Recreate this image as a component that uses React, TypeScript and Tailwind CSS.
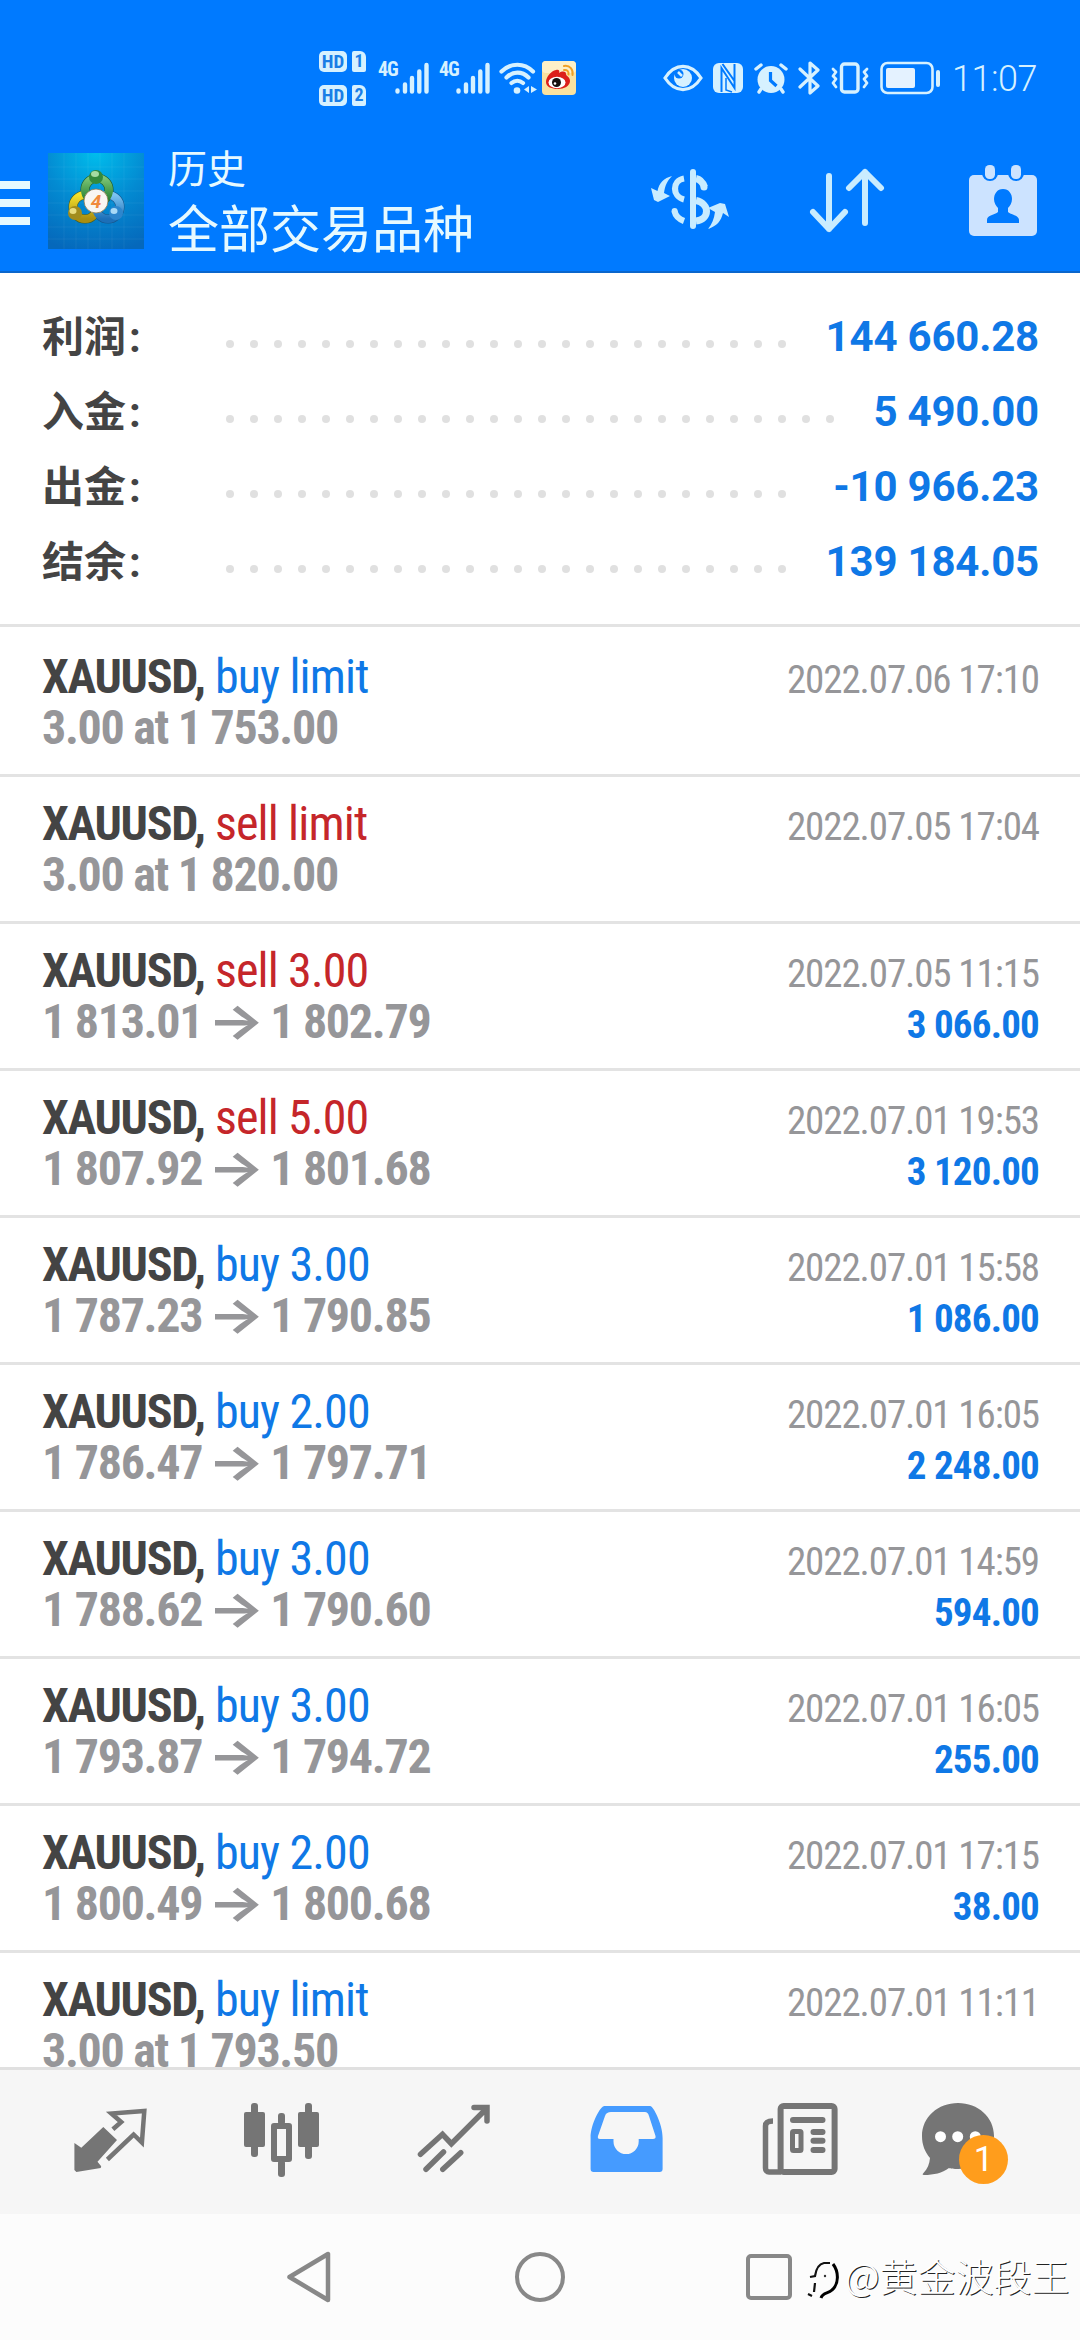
import React from 'react';

type Side = 'buy' | 'sell';

interface HistoryItem {
  side: Side;
  label: string;
  time: string;
  order?: string;
  open?: string;
  close?: string;
  profit?: string;
}

interface SummaryItem {
  label: string;
  value: string;
  dots: number;
}

const summary: SummaryItem[] = [
  { label: '利润', value: '144 660.28', dots: 24 },
  { label: '入金', value: '5 490.00', dots: 26 },
  { label: '出金', value: '-10 966.23', dots: 24 },
  { label: '结余', value: '139 184.05', dots: 24 },
];

const history: HistoryItem[] = [
  { side: 'buy', label: 'buy limit', time: '2022.07.06 17:10', order: '3.00 at 1 753.00' },
  { side: 'sell', label: 'sell limit', time: '2022.07.05 17:04', order: '3.00 at 1 820.00' },
  { side: 'sell', label: 'sell 3.00', time: '2022.07.05 11:15', open: '1 813.01', close: '1 802.79', profit: '3 066.00' },
  { side: 'sell', label: 'sell 5.00', time: '2022.07.01 19:53', open: '1 807.92', close: '1 801.68', profit: '3 120.00' },
  { side: 'buy', label: 'buy 3.00', time: '2022.07.01 15:58', open: '1 787.23', close: '1 790.85', profit: '1 086.00' },
  { side: 'buy', label: 'buy 2.00', time: '2022.07.01 16:05', open: '1 786.47', close: '1 797.71', profit: '2 248.00' },
  { side: 'buy', label: 'buy 3.00', time: '2022.07.01 14:59', open: '1 788.62', close: '1 790.60', profit: '594.00' },
  { side: 'buy', label: 'buy 3.00', time: '2022.07.01 16:05', open: '1 793.87', close: '1 794.72', profit: '255.00' },
  { side: 'buy', label: 'buy 2.00', time: '2022.07.01 17:15', open: '1 800.49', close: '1 800.68', profit: '38.00' },
  { side: 'buy', label: 'buy limit', time: '2022.07.01 11:11', order: '3.00 at 1 793.50' },
];

const SimBadge: React.FC<{ slot: string }> = ({ slot }) => (
  <div className="flex h-[21px] gap-[5px] text-[#1a7ee6] font-bold">
    <span className="flex w-7 items-center justify-center rounded-[5px] bg-[#d6f1ff] text-[19px] leading-none [font-stretch:75%]">HD</span>
    <span className="flex w-3.5 items-center justify-center rounded-[2px] rounded-tr-[6px] bg-[#d6f1ff] text-[18px] leading-none [font-stretch:75%]">{slot}</span>
  </div>
);

const Signal: React.FC = () => (
  <div className="flex h-8 w-[51px] items-start">
    <span className="w-[17px] text-[20px] leading-[15px] font-bold tracking-[-1px] [font-stretch:75%]">4G</span>
    <svg className="h-8 w-[34px]" viewBox="0 0 34 32" stroke="currentColor" strokeWidth="4.4" strokeLinecap="round">
      <path d="M2.5 28.5v1M10 22.5v7M17 16v13.5M24.3 9.5v20M31.5 3v26.5" />
    </svg>
  </div>
);

const StatusBar: React.FC = () => (
  <div className="flex h-[132px] items-center pt-6 pl-[319px] text-[#d6f1ff]">
    <div className="flex w-12 flex-col gap-[13px]">
      <SimBadge slot="1" />
      <SimBadge slot="2" />
    </div>
    <div className="ml-[11px] flex gap-[10px]">
      <Signal />
      <Signal />
    </div>
    <svg className="ml-[9px] h-8 w-[39px]" viewBox="0 0 39 32" fill="none" stroke="currentColor" strokeWidth="4.2" strokeLinecap="round">
      <path d="M2.5 9.5C12 .5 25 .5 34 9.5M7.5 15.500C14 9 23 9 29.5 15.500M12.5 21c3.5-3 8-3 11.5 0" />
      <circle cx="18" cy="28.5" r="3.3" fill="currentColor" stroke="none" />
      <path d="M30 24v7l-5-3.5zM32 24l6 3.5-6 3.5z" fill="currentColor" stroke="none" />
    </svg>
    <svg className="ml-[4px] h-[34px] w-[34px]" viewBox="0 0 34 34">
      <rect width="34" height="34" rx="4" fill="#f9e2a0" />
      <rect width="34" height="12" rx="4" fill="#fdf0c8" />
      <path d="M4 21c0-5 5-11 10-12 3-1 4 1 3 3 3-2 7-2 7 1 0 2 4 3 4 7 0 5-6 8-12 8S4 26 4 21z" fill="#dc1f1a" />
      <ellipse cx="15" cy="21.5" rx="8.5" ry="5.8" fill="#fff" />
      <circle cx="14.5" cy="21.5" r="4.5" fill="#15100d" />
      <circle cx="13" cy="22.5" r="1.3" fill="#fff" />
      <path d="M22 9c3-.6 5 1.5 4.5 4.5M22 5c6-1 9.5 3.5 8.5 9" fill="none" stroke="#f0a024" strokeWidth="2" strokeLinecap="round" />
    </svg>

    {/* Right side indicators */}
    <svg className="ml-[87px] h-[28px] w-[40px]" viewBox="0 0 40 28">
      <path d="M2 14C12-1.500 28-1.500 38 14 28 29.500 12 29.500 2 14z" fill="none" stroke="currentColor" strokeWidth="3.2" />
      <circle cx="20" cy="14" r="9" fill="currentColor" />
      <circle cx="16" cy="10" r="4.5" fill="#007aff" />
      <path d="M15 8l4 4" stroke="currentColor" strokeWidth="2.5" />
    </svg>
    <svg className="ml-[10px] h-[30px] w-[30px]" viewBox="0 0 30 30">
      <rect width="30" height="30" rx="6" fill="currentColor" />
      <path d="M8.5 29V5l13 20V1M9.5 1l12 17" fill="none" stroke="#007aff" strokeWidth="2" />
      <path d="M13 15v12l6 2" fill="none" stroke="#007aff" strokeWidth="1.5" />
    </svg>
    <svg className="ml-[11px] h-[31px] w-[34px]" viewBox="0 0 34 31">
      <circle cx="17" cy="16.5" r="13.5" fill="currentColor" />
      <path d="M2 6l5-4M32 6l-5-4M7 26l-2 3M27 26l2 3" stroke="currentColor" strokeWidth="3.4" strokeLinecap="round" />
      <path d="M16.5 9v8.5l6 5.5" fill="none" stroke="#007aff" strokeWidth="3.2" />
    </svg>
    <svg className="ml-[10px] h-[34px] w-[24px]" viewBox="0 0 24 34" fill="none" stroke="currentColor" strokeWidth="3.2" strokeLinecap="round" strokeLinejoin="round">
      <path d="M2 8l18 17-8 7V2l8 7L2 26" />
    </svg>
    <svg className="ml-[8px] h-[32px] w-[40px]" viewBox="0 0 40 32" fill="none" stroke="currentColor" strokeWidth="3.4" strokeLinejoin="round" strokeLinecap="round">
      <rect x="11.5" y="2" width="16.5" height="28" rx="3" />
      <path d="M3 7l3 3-3 4 3 3-3 4 3 4M37 7l-3 3 3 4-3 3 3 4-3 4" strokeWidth="2.8" />
    </svg>
    <svg className="ml-[10px] h-[34px] w-[61px]" viewBox="0 0 61 34">
      <rect x="1.5" y="2" width="51" height="30" rx="6" fill="none" stroke="currentColor" strokeWidth="2.6" />
      <rect x="6" y="7" width="29" height="20" rx="2" fill="#e4f2ff" />
      <rect x="56" y="9" width="4" height="17" rx="2" fill="currentColor" />
    </svg>
    <span className="ml-[11px] pt-0.5 text-[36px] leading-none font-light tracking-[-0.5px]">11:07</span>
  </div>
);

const AppLogo: React.FC = () => (
  <svg className="mb-px ml-[18px] h-24 w-24" viewBox="0 0 96 96">
    <defs>
      <radialGradient id="sky" cx="0.5" cy="0" r="1.05">
        <stop offset="0" stopColor="#00bdec" />
        <stop offset="0.5" stopColor="#038bd2" />
        <stop offset="1" stopColor="#0568bb" />
      </radialGradient>
      <linearGradient id="green" x2="0" y2="1">
        <stop stopColor="#7cc576" />
        <stop offset="1" stopColor="#1f7a2c" />
      </linearGradient>
      <linearGradient id="yellow" x2="0" y2="1">
        <stop stopColor="#f5e22c" />
        <stop offset="1" stopColor="#a98e10" />
      </linearGradient>
      <linearGradient id="blue" x2="0" y2="1">
        <stop stopColor="#7cc4f2" />
        <stop offset="1" stopColor="#1c6fb8" />
      </linearGradient>
    </defs>
    <rect width="96" height="96" fill="url(#sky)" />
    <path d="M16 0v96M28 0v96M40 0v96M52 0v96M64 0v96M76 0v96M0 14h96M0 26h96M0 38h96M0 50h96M0 62h96M0 74h96M0 86h96" stroke="#fff" strokeOpacity="0.06" />
    <g fill="none" strokeWidth="8">
      <circle cx="37" cy="54" r="12" stroke="#4d5c17" strokeWidth="9" />
      <circle cx="60" cy="54" r="12" stroke="#185489" strokeWidth="9" />
      <circle cx="49" cy="37" r="12" stroke="#1e5525" strokeWidth="9" />
      <circle cx="37" cy="54" r="12" stroke="url(#yellow)" />
      <circle cx="60" cy="54" r="12" stroke="url(#blue)" />
      <circle cx="49" cy="37" r="12" stroke="url(#green)" />
    </g>
    <circle cx="48" cy="24" r="7" fill="#348a3c" />
    <ellipse cx="47" cy="21" rx="4" ry="3" fill="#a6dca2" />
    <circle cx="27" cy="60" r="7" fill="#a28c1c" />
    <ellipse cx="25" cy="58" rx="3.5" ry="3" fill="#e9dc7e" />
    <circle cx="68" cy="60" r="7" fill="#2d86cd" />
    <ellipse cx="66" cy="58" rx="3.5" ry="3" fill="#a9daf7" />
    <circle cx="48" cy="48" r="12" fill="#f8f6f2" stroke="#8a7a50" strokeWidth="0.8" />
    <text x="48" y="54.5" textAnchor="middle" fontSize="19" fontWeight="700" fontStyle="italic" fill="#f08a3c">4</text>
  </svg>
);

const AppBar: React.FC = () => (
  <div className="flex h-[141px] items-center border-b-2 border-[#0a66cc] text-[#e6f9ff]">
    <div className="flex w-[30px] flex-col gap-[10px] pt-[3px]">
      <span className="h-2 bg-[#e6f9ff]" />
      <span className="h-2 bg-[#e6f9ff]" />
      <span className="h-2 bg-[#e6f9ff]" />
    </div>
    <AppLogo />
    <div className="ml-[24px] w-[482px] pt-[3px]">
      <div className="text-[39px] leading-[54px]">历史</div>
      <div className="pt-px text-[51px] leading-[66px]">全部交易品种</div>
    </div>
    {/* Profit, sort and calendar actions */}
    <svg className="mb-[7px] h-[64px] w-[82px] text-[#c9ecff]" viewBox="0 0 82 64">
      <rect x="40" y="3" width="6" height="60" rx="3" fill="currentColor" />
      <path d="M34 12.5c-12 2-12 18 0 21M24.5 45c1 5 4 8 9.5 10" fill="none" stroke="currentColor" strokeWidth="6.2" />
      <circle cx="24.6" cy="45" r="3" fill="currentColor" />
      <path d="M46 12.5c5 1 7 4.500 8.5 8.500M46 34.500c14 3 14 19 0 20.500" fill="none" stroke="currentColor" strokeWidth="7" />
      <circle cx="54" cy="21" r="3.5" fill="currentColor" />
      <path d="M22 10C14 12 9 17 7.5 25L1 22l3 12 4 2 12-6-6-3c1-7 3-12 8-17z" fill="currentColor" />
      <path d="M58 63c9-3 13-8 15-16l6 4-4-13-5-1-12 5 7 4c-1 7-3 12-7 17z" fill="currentColor" />
    </svg>
    <svg className="mb-[2px] ml-[77px] h-[66px] w-[76px] text-[#c9ecff]" viewBox="0 0 76 66" fill="none" stroke="currentColor" strokeWidth="6" strokeLinecap="round" strokeLinejoin="round">
      <path d="M20 8v53M4 44l16 17 16-17M56 55V4M40 20L56 4l16 16" />
    </svg>
    <svg className="mb-[4px] ml-[83px] h-[72px] w-[70px] text-[#cce3ff]" viewBox="0 0 70 72">
      <rect x="1" y="11" width="68" height="61" rx="5" fill="currentColor" />
      <rect x="14" y="-4" width="16" height="21" rx="8" fill="#007aff" />
      <rect x="40" y="-4" width="16" height="21" rx="8" fill="#007aff" />
      <rect x="17" y="1" width="10" height="14" rx="4.5" fill="currentColor" />
      <rect x="43" y="1" width="10" height="14" rx="4.5" fill="currentColor" />
      <path d="M35 25c-6 0-9 5-9 10 0 4 2 7 4 9v4c-3 3-11 3-11 8v3h32v-3c0-5-8-5-11-8v-4c2-2 4-5 4-9 0-5-3-10-9-10z" fill="#007aff" />
    </svg>
  </div>
);

const SummaryRow: React.FC<{ item: SummaryItem }> = ({ item }) => (
  <div className="flex h-[75px] items-center">
    <span className="w-[184px] pt-0.5 text-[42px] leading-none font-bold text-[#444444]">
      {item.label}
      <span className="pl-[3px]">:</span>
    </span>
    <div className="flex gap-4 pt-3.5">
      {Array.from({ length: item.dots }, (_, i) => (
        <span key={i} className="h-2 w-2 rounded-full bg-[#e0e0e0]" />
      ))}
    </div>
    <span className="ml-auto text-[42px] leading-none font-bold tracking-[-0.2px] text-[#0f78e6]">{item.value}</span>
  </div>
);

const HistoryRow: React.FC<{ item: HistoryItem }> = ({ item }) => (
  <div className="flex h-[147px] shrink-0 justify-between border-b-[3px] border-[#e3e3e3] pt-[21px] pr-[41px] pl-[42px] [font-stretch:75%]">
    <div className="text-[48px] leading-[51px] whitespace-nowrap">
      <div className="tracking-[-0.85px]">
        <span className="font-bold tracking-[-1.3px] text-[#444444]">XAUUSD,</span>{' '}
        <span className={item.side === 'buy' ? 'text-[#0f78e6]' : 'text-[#c5262a]'}>{item.label}</span>
      </div>
      <div className="font-bold tracking-[-1.3px] text-[#969699]">
        {item.order ? (
          item.order
        ) : (
          <>
            {item.open} <span className="mr-[3px] ml-px inline-block scale-x-125 font-['Inter'] leading-none font-bold">→</span> {item.close}
          </>
        )}
      </div>
    </div>
    <div className="pt-1 text-right text-[39px] leading-[51px] whitespace-nowrap">
      <div className="tracking-[-1.1px] text-[#969699]">{item.time}</div>
      {item.profit && <div className="font-bold tracking-[-0.8px] text-[#0f78e6]">{item.profit}</div>}
    </div>
  </div>
);

const TabIcon: React.FC<{ children: React.ReactNode; active?: boolean }> = ({ children, active }) => (
  <svg className={`h-[88px] w-[88px] overflow-visible ${active ? 'text-[#459bff]' : 'text-[#757575]'}`} viewBox="0 0 88 88" fill="currentColor">
    {children}
  </svg>
);

const TabBar: React.FC = () => (
  <div className="grid h-[147px] grid-cols-6 items-center justify-items-center border-t-[3px] border-[#e0e0e0] bg-[#f6f6f6] px-6">
    <TabIcon>
      <path d="M8.4 45l6.9 4.7L37.3 29 51 42 31.5 63.700l3.7 4.500-.5 1.800-24.3 4-2-2z" />
      <path d="M46.9 31.300l8.3-7.300-9.8-8.500L78.3 13l-2.4 31.500-8.3-8L41.4 61.500" fill="none" stroke="currentColor" strokeWidth="4.5" />
    </TabIcon>
    <TabIcon>
      <rect x="6" y="14" width="21" height="35" rx="2" />
      <rect x="13" y="5" width="7" height="54" rx="3" />
      <path d="M36 28h15v33H36z" fill="none" stroke="currentColor" strokeWidth="6" strokeLinejoin="round" />
      <rect x="40" y="15" width="7" height="12" rx="3" />
      <rect x="40" y="62" width="7" height="17" rx="3" />
      <rect x="60" y="14" width="21" height="35" rx="2" />
      <rect x="67" y="5" width="7" height="56" rx="3" />
    </TabIcon>
    <TabIcon>
      <g fill="none" stroke="currentColor" strokeWidth="5.5" strokeLinecap="round">
        <path d="M10.5 56.300l22-20 8.900 9.400L75.9 11.300M64 9.500h13V23M16 71.300L33.5 54M32.8 71.300l17.900-16.600" />
      </g>
    </TabIcon>
    <TabIcon active>
      <path fillRule="evenodd" d="M22.4 8h45.800c3 0 12.400 18 12.400 32v31c0 2-1 3-3 3h-66c-2 0-3-1-3-3V40C8.600 26 18.400 8 22.400 8zM29 14c-3 0-5 1-6 4l-7 20c-.5 2 0 3 2 3h13.500v2.500a12.600 12.600 0 0 0 25.200 0V41H71c2 0 3-1 2.500-3l-6.500-20c-1-3-2-4-4-4z" />
    </TabIcon>
    <TabIcon>
      <g fill="none" stroke="currentColor" strokeWidth="6" strokeLinecap="round">
        <rect x="26.6" y="8" width="54" height="66" rx="3" />
        <path d="M27 74H15c-2 0-3.5-1.500-3.5-4V28c0-3 2-5 7.500-5" strokeWidth="5.5" strokeLinecap="butt" />
        <path d="M39 22h29.500M59.5 34h9M59.5 42.700h9M59.5 52h9" />
        <rect x="38.5" y="33.5" width="8.5" height="19" rx="1" strokeWidth="5" />
      </g>
    </TabIcon>
    <div className="relative">
      <TabIcon>
        <path d="M32 5c20 0 36 14 36 33S52 71 32 71c-4 0-8-.5-9-1-7 5-15 7-25 7-2 0-1.500-1-.5-2 4-4 6-9 6.500-15-5-6-8-13-8-22C-4 19 12 5 32 5z" />
        <g fill="#ffffff">
          <circle cx="14.5" cy="38.7" r="5.5" />
          <circle cx="31.7" cy="38.7" r="5.5" />
          <circle cx="49.3" cy="38.7" r="5.5" />
        </g>
      </TabIcon>
      <span className="absolute top-[37px] left-[33px] flex h-[49px] w-[49px] items-center justify-center rounded-full bg-[#ff9d1c] text-[35px] leading-none text-white">
        1
      </span>
    </div>
  </div>
);

const NavBar: React.FC = () => (
  <div className="relative flex h-[126px] items-center bg-[#fcfcfc] pl-[284px] text-[#888888]">
    <svg className="h-[54px] w-12" viewBox="0 0 48 54" fill="none" stroke="currentColor" strokeWidth="4.5" strokeLinejoin="round">
      <path d="M5.5 27L44 4v46z" />
    </svg>
    <span className="ml-[183px] h-[50px] w-[50px] rounded-full border-4 border-[#888888]" />
    <span className="ml-[181px] h-[46px] w-[46px] rounded-[5px] border-4 border-[#888888]" />

    {/* Author mark */}
    <div className="absolute top-[40px] left-[806px] flex items-center font-['Noto_Sans_CJK_SC','Roboto',sans-serif] text-white">
      <svg className="h-12 w-[39px]" viewBox="0 0 39 48" fill="none">
        <path d="M4 23l5-1c1-7 4-12 9-13h6M9 29L8 38M2 40l4 2" stroke="#111" strokeWidth="2.2" />
        <path d="M27 10c6 8 6 20-1 26-4 4-9 2-11 8" stroke="#000" strokeWidth="3" />
        <circle cx="19" cy="22" r="1.2" fill="#333" />
      </svg>
      <span className="pb-1.5 text-[38px] leading-none font-light whitespace-nowrap [text-shadow:1px_1px_0_#222]">@黄金波段王</span>
    </div>
  </div>
);

const App: React.FC = () => {
  return (
    <div className="flex h-[2340px] w-[1080px] flex-col overflow-hidden bg-white font-['Roboto','Noto_Sans_CJK_SC',sans-serif]">
      <header className="bg-[#007aff]">
        <StatusBar />
        <AppBar />
      </header>

      <section className="mb-[3px] h-[354px] border-b-[3px] border-[#e3e3e3] pt-[26px] pr-[41px] pl-[42px]">
        {summary.map((item) => (
          <SummaryRow key={item.label} item={item} />
        ))}
      </section>

      <main className="flex h-[1437px] flex-col overflow-hidden">
        {history.map((item, index) => (
          <HistoryRow key={index} item={item} />
        ))}
      </main>

      <TabBar />
      <NavBar />
    </div>
  );
};

export default App;
